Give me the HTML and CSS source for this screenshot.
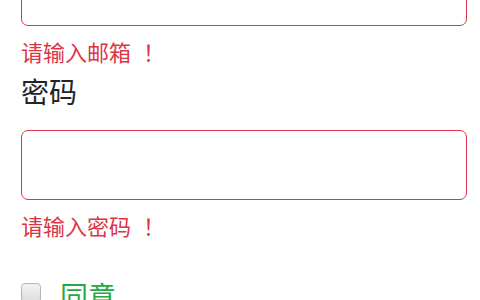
FILE: index.html
```html
<!DOCTYPE html>
<html lang="zh">
<head>
<meta charset="utf-8">
<link rel="stylesheet" href="styles.css">
</head>
<body>
<form class="form">
  <div class="field">
    <input class="input is-invalid" type="email">
    <div class="error">请输入邮箱<span class="bang">！</span></div>
  </div>
  <div class="field">
    <label class="label">密码</label>
    <input class="input is-invalid" type="password">
    <div class="error">请输入密码<span class="bang">！</span></div>
  </div>
  <div class="check">
    <span class="box"></span>
    <span class="check-label">同意</span>
  </div>
</form>
</body>
</html>
```

FILE: styles.css
```css
html, body {
  margin: 0;
  padding: 0;
  background: #fff;
  overflow: hidden;
}
body {
  font-family: "Noto Sans CJK SC", "Noto Sans", sans-serif;
  color: #212529;
}
.form {
  margin-top: -44px;
  padding-left: 21px;
  width: 446px;
  display: flex;
  flex-direction: column;
}
.field {
  display: flex;
  flex-direction: column;
}
.input {
  box-sizing: border-box;
  width: 446px;
  height: 70px;
  margin: 0;
  border: 1px solid #dc3545;
  border-radius: 7px;
  background: #fff;
  outline: none;
}
.error {
  margin-top: 10px;
  font-size: 22px;
  line-height: 30px;
  color: #dc3545;
}
.bang {
  margin-left: 12px;
}
.label {
  margin-top: 7px;
  margin-bottom: 21px;
  font-size: 28px;
  line-height: 36px;
  color: #212529;
}
.check {
  margin-top: 37px;
  display: flex;
  align-items: flex-start;
  gap: 19px;
  line-height: 36px;
}
.box {
  box-sizing: border-box;
  margin-top: 6px;
  width: 20px;
  height: 20px;
  border: 1px solid #b5b5b5;
  border-radius: 4px;
  background: linear-gradient(#f2f2f2, #dcdcdc);
}
.check-label {
  font-size: 28px;
  color: #28a745;
}
```
